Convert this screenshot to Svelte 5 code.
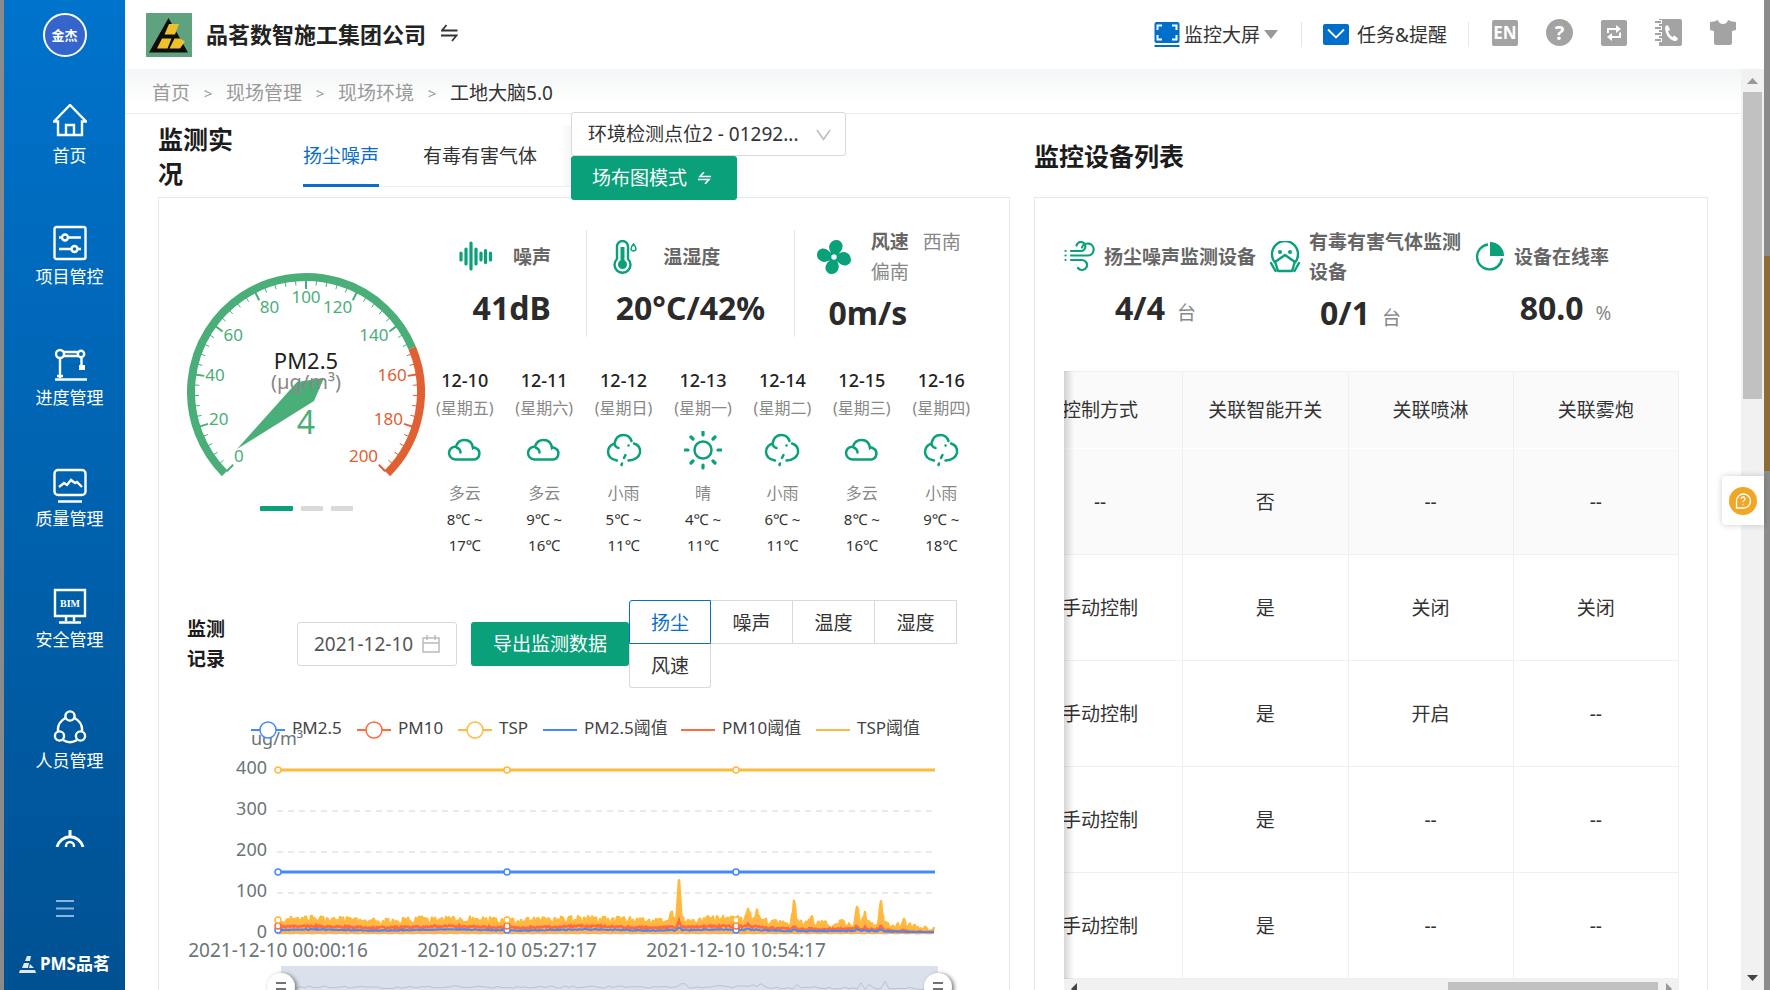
<script lang="ts">
	const menu = [
		{ name: "首页", icon: "home" },
		{ name: "项目管控", icon: "project" },
		{ name: "进度管理", icon: "progress" },
		{ name: "质量管理", icon: "quality" },
		{ name: "安全管理", icon: "safety" },
		{ name: "人员管理", icon: "people" },
		{ name: "", icon: "gauge" },
	];

	const days = [
		{ date: "12-10", week: "星期五", type: "多云", low: 8, high: 17 },
		{ date: "12-11", week: "星期六", type: "多云", low: 9, high: 16 },
		{ date: "12-12", week: "星期日", type: "小雨", low: 5, high: 11 },
		{ date: "12-13", week: "星期一", type: "晴", low: 4, high: 11 },
		{ date: "12-14", week: "星期二", type: "小雨", low: 6, high: 11 },
		{ date: "12-15", week: "星期三", type: "多云", low: 8, high: 16 },
		{ date: "12-16", week: "星期四", type: "小雨", low: 9, high: 18 },
	];

	const rows = [
		["--", "否", "--", "--"],
		["手动控制", "是", "关闭", "关闭"],
		["手动控制", "是", "开启", "--"],
		["手动控制", "是", "--", "--"],
		["手动控制", "是", "--", "--"],
	];

	const kinds = ["扬尘", "噪声", "温度", "湿度", "风速"];
	let kind = "扬尘";
	let tab = "dust";
	let date = "2021-12-10";

	// gauge: 0 - 200 over 270 degrees
	const cx = 306;
	const cy = 392;
	function polar(value: number, rx: number, ry = rx) {
		const a = ((225 - value * 1.35) * Math.PI) / 180;
		return { x: cx + rx * Math.cos(a), y: cy - ry * Math.sin(a) };
	}
	function arc(from: number, to: number, r: number) {
		const a = polar(from, r);
		const b = polar(to, r);
		const large = (to - from) * 1.35 > 180 ? 1 : 0;
		return `M${a.x} ${a.y}A${r} ${r} 0 ${large} 1 ${b.x} ${b.y}`;
	}
	const ticks = Array.from({ length: 51 }, (_, i) => {
		const value = i * 4;
		const major = i % 5 === 0;
		return {
			value,
			major,
			color: value > 150 ? "#e05f33" : "#4aae78",
			from: polar(value, 112),
			to: polar(value, major ? 103 : 107),
			label: polar(value, 102, 93),
			anchor: value === 100 ? "middle" : value < 100 ? "start" : "end",
		};
	});

	// chart
	const legend = [
		{ name: "PM2.5", x: 251, color: "#4489ff", dot: true },
		{ name: "PM10", x: 357, color: "#ff6b3d", dot: true },
		{ name: "TSP", x: 458, color: "#ffb93b", dot: true },
		{ name: "PM2.5阈值", x: 543, color: "#4489ff", dot: false },
		{ name: "PM10阈值", x: 681, color: "#ff6b3d", dot: false },
		{ name: "TSP阈值", x: 816, color: "#ffb93b", dot: false },
	];
	const yAxis = [400, 300, 200, 100, 0];
	const xAxis = [
		{ x: 278, text: "2021-12-10 00:00:16" },
		{ x: 507, text: "2021-12-10 05:27:17" },
		{ x: 736, text: "2021-12-10 10:54:17" },
	];
	const peaks = [
		[671, 12], [679, 42], [748, 14], [757, 9], [794, 21],
		[811, 10], [857, 20], [865, 11], [881, 23], [903, 7],
	];
	let seed = 7;
	function random() {
		seed = (seed * 16807) % 2147483647;
		return seed / 2147483647;
	}
	const tsp: string[] = [];
	const pm10: string[] = [];
	const pm25: string[] = [];
	for (let x = 277; x <= 934; x += 1) {
		const drop = x > 740 ? (x - 740) / 28 : 0;
		const wave = Math.sin((x - 277) / 22) * 1;
		let peak = 0;
		for (const [px, h] of peaks) {
			const d = Math.abs(x - px);
			if (d < 3) peak = Math.max(peak, h * (1 - d / 3));
		}
		const top = 921 + drop - wave + (random() - 0.5) * 8 - peak;
		tsp.push(`${x},${Math.min(top, 931).toFixed(1)}`);
		pm10.push(`${x},${Math.min(927 + drop * 0.7 - wave * 0.8 + (random() - 0.5) * 2 - peak / 6, 932).toFixed(1)}`);
		pm25.push(`${x},${Math.min(930 + drop * 0.3 - wave * 0.5 + (random() - 0.5) - peak / 14, 932).toFixed(1)}`);
	}
	const shadow = tsp.filter((_, i) => i % 4 === 0).map((p) => {
		const [x, y] = p.split(",").map(Number);
		return `${x + 4},${(991 - (934 - y) * 0.3).toFixed(1)}`;
	});
</script>

<div class="app">
	<aside class="sidebar">
		<div class="avatar">金杰</div>
		<nav>
			{#each menu as item}
				<a href="#{item.icon}" aria-label={item.name || "更多"}>
					<svg width="34" height="36" viewBox="0 0 34 36" fill="none" stroke="#fff" stroke-width="2.4">
						{#if item.icon === "home"}
							<path d="M1 17.500 17 1l16 16.500h-4V31H5V17.500zM13 31V21h8v10" />
						{:else if item.icon === "project"}
							<rect x="1.500" y="2" width="31" height="32" rx="2" />
							<path d="M6 12.500h3M15 12.500h13M6 24h12M25 24h3" />
							<circle cx="12" cy="12.500" r="3" />
							<circle cx="21.500" cy="24" r="3" />
						{:else if item.icon === "progress"}
							<circle cx="7" cy="8" r="4" />
							<circle cx="28" cy="8" r="3.200" />
							<path d="M11 6h14M11 10h14M28.500 11v10M2 33.500h32M7 12v20M4 30h6" />
							<path d="M26 19h6v5h-6z" fill="#fff" stroke="none" />
						{:else if item.icon === "quality"}
							<rect x="1.500" y="3" width="31" height="25" rx="3.500" />
							<path d="m6 20 5-4 3 2 4-5 4 3 2-1 5 5M5 34.500h24" />
						{:else if item.icon === "safety"}
							<path d="M2 2h30v26H2zM13 28v5M21 28v5M6 34.500h22" />
							<text x="17" y="19" text-anchor="middle">BIM</text>
						{:else if item.icon === "people"}
							<circle cx="17" cy="7" r="4.600" />
							<circle cx="6.500" cy="27" r="4.600" />
							<circle cx="27.500" cy="27" r="4.600" />
							<path d="M12.500 9C7 12 4.500 17 5 22M21.500 9C27 12 29.500 17 29 22M10 31q7 4.500 14 0" />
						{:else}
							<path d="M4 17a13.500 14 0 0 1 26 0M17 0v7" stroke-width="3" />
							<circle cx="17" cy="16" r="4" />
						{/if}
					</svg>
					<span>{item.name}</span>
				</a>
			{/each}
		</nav>
		<button class="fold" aria-label="收起菜单">
			<svg width="18" height="17" viewBox="0 0 18 17" stroke="#8db4dc" stroke-width="2">
				<path d="M0 1h18M0 8.500h18M0 16h18" />
			</svg>
		</button>
		<div class="brand">
			<svg width="17" height="17" viewBox="0 0 17 17" fill="#dfeaf6">
				<path d="M8 0h4l-1 5H6zM5 7h5l-1 5H3zM11 8l4 4h-5zM1 14h15l1 3H0z" />
			</svg>
			<span>PMS品茗</span>
		</div>
	</aside>

	<div class="main">
		<header>
			<svg class="logo" width="46" height="44" viewBox="0 0 46 44">
				<path d="M0 0h46v44H0z" fill="#5fa37e" />
				<path d="M22.500 5 42 39.500H3z" fill="#0c0c0a" />
				<path d="M23 11h10l-4 10.500H18.500zM16 25.500h9.500L21.500 35.500H11zM28.500 25.500h5.500l5 3-5 7H23.500z" fill="#edc02c" />
			</svg>
			<h1>品茗数智施工集团公司</h1>
			<svg class="swap" width="17" height="18" viewBox="0 0 17 18" fill="none" stroke="#333" stroke-width="1.800">
				<path d="M5.500 1 1 6.500h15.500M0 11.500h15.500L11 17" />
			</svg>
			<div class="actions">
				<a class="screen" href="#screen">
					<svg width="26" height="26" viewBox="0 0 26 26">
						<rect x="0.500" width="25" height="21" rx="2" fill="#006fcb" />
						<path d="M.5 24h25" stroke="#006fcb" stroke-width="2" />
						<path d="M3.500 8V3.500H8M18 3.500h4.500V8M22.500 13v4.500H18M8 17.500H3.500V13" fill="none" stroke="#fff" stroke-width="2" />
					</svg>
					<span>监控大屏</span>
					<svg width="14" height="9" viewBox="0 0 14 9"><path d="M0 0h14L7 9z" fill="#999" /></svg>
				</a>
				<i></i>
				<a class="task" href="#task">
					<svg width="26" height="21" viewBox="0 0 26 21">
						<rect width="26" height="21" rx="2" fill="#006fcb" />
						<path d="m5 5.500 8 8 8-8" fill="none" stroke="#fff" stroke-width="1.800" />
					</svg>
					<span>任务&amp;提醒</span>
				</a>
				<i></i>
				<div class="tools">
					<button class="lang">EN</button>
					<button class="help" aria-label="帮助">?</button>
					<button aria-label="切换">
						<svg width="26" height="26" viewBox="0 0 26 26">
							<rect width="26" height="26" rx="2" fill="#a3a3a3" />
							<path d="M7 13V9h9M19 12.500V17h-9" fill="none" stroke="#fff" stroke-width="2" />
							<path d="m15 5 5 4-5 4zM11 13l-5 4 5 4z" fill="#fff" />
						</svg>
					</button>
					<button aria-label="通讯录">
						<svg width="27" height="27" viewBox="0 0 27 27">
							<path d="M4 0h21q2 0 2 2v23q0 2-2 2H4z" fill="#a3a3a3" />
							<path d="M1 3h6M1 9h6M1 15h6M1 21h6" stroke="#fff" stroke-width="4" />
							<path d="M0 3h6M0 9h6M0 15h6M0 21h6" stroke="#a3a3a3" stroke-width="2" />
							<path d="M10 8.500q1-3 3-2l2 4-2 2q1.500 4 4.500 5.500l2-1.500 3.500 3q-.5 3-4 2.500-8.500-3-9-13.500z" fill="#fff" />
						</svg>
					</button>
					<button aria-label="皮肤">
						<svg width="26" height="25" viewBox="0 0 26 25">
							<path d="M0 2q4 0 8-2 1 4 5 4t5-4q4 2 8 2v8l-4 1v12q0 2-2 2H6q-2 0-2-2V11l-4-1z" fill="#a3a3a3" />
						</svg>
					</button>
				</div>
			</div>
		</header>

		<div class="body">
			<div class="page">
				<div class="crumbs">
					<a href="#home">首页</a><b>&gt;</b><a href="#site">现场管理</a><b>&gt;</b><a href="#env">现场环境</a><b>&gt;</b><span>工地大脑5.0</span>
				</div>
				<div class="columns">
					<section>
						<div class="head">
							<h2 class="narrow">监测实况</h2>
							<div class="tabs">
								<button class:active={tab === "dust"} on:click={() => (tab = "dust")}>扬尘噪声</button>
								<button class:active={tab === "gas"} on:click={() => (tab = "gas")}>有毒有害气体</button>
							</div>
							<div class="switches">
								<div class="select">
									<select aria-label="检测点位">
										<option>环境检测点位2 - 01292...</option>
									</select>
									<svg width="15" height="12" viewBox="0 0 15 12" fill="none" stroke="#bbb" stroke-width="1.500">
										<path d="m1 1 6.500 9.500L14 1" />
									</svg>
								</div>
								<button class="green mode">
									场布图模式
									<svg width="13" height="12" viewBox="0 0 13 12" fill="none" stroke="#fff" stroke-width="1.600">
										<path d="M6 0 2 4.500h11M0 7.500h11L7 12" />
									</svg>
								</button>
							</div>
						</div>

						<div class="card">
							<div class="overview">
								<div class="dial">
									<svg viewBox="187 262 238 226">
										<path d={arc(0, 150, 115)} fill="none" stroke="#4aae78" stroke-width="8" />
										<path d={arc(150, 200, 115)} fill="none" stroke="#e05f33" stroke-width="8" />
										{#each ticks as t}
											<line x1={t.from.x} y1={t.from.y} x2={t.to.x} y2={t.to.y} stroke={t.color} stroke-width={t.major ? 2 : 1} />
											{#if t.value % 20 === 0}
												<text x={t.label.x} y={t.label.y + 4} text-anchor={t.anchor} fill={t.color} font-size="17">{t.value}</text>
											{/if}
										{/each}
										<path d="M237 449 297 382 324 378 314 401z" fill="#4aae78" />
										<text x="306" y="369" text-anchor="middle" fill="#222" font-size="22">PM2.5</text>
										<text x="306" y="389" text-anchor="middle" fill="#888" font-size="20">(µg/m³)</text>
										<text x="306" y="434" text-anchor="middle" fill="#4aae78" font-size="32">4</text>
									</svg>
									<div class="dots"><i class="on"></i><i></i><i></i></div>
								</div>

								<div class="facts">
									<div class="metrics">
										<div class="metric">
											<div class="name">
												<svg width="34" height="34" viewBox="0 0 34 34" stroke="#0aa07a" stroke-width="3.200" stroke-linecap="round">
													<path d="M2 13v7M7 9v15M12 3v26M17 9v15M22 13v7M26.500 10.500v12M31.500 13v7" />
												</svg>
												<span>噪声</span>
											</div>
											<strong>41dB</strong>
										</div>
										<div class="metric">
											<div class="name">
												<svg width="34" height="34" viewBox="0 0 34 34" fill="none" stroke="#0aa07a" stroke-width="2.400">
													<path d="M8 19V6.500a5.500 5.500 0 0 1 11 0V19a8 8 0 1 1-11 0z" />
													<path d="M13.500 7v16" stroke-width="4" />
													<circle cx="13.500" cy="24.500" r="4.500" fill="#0aa07a" stroke="none" />
													<path d="M24.500 4q5 6 0 7-5-1 0-7z" stroke-width="1.500" />
												</svg>
												<span>温湿度</span>
											</div>
											<strong>20°C/42%</strong>
										</div>
										<div class="metric wrapped">
											<div class="name">
												<svg width="34" height="34" viewBox="0 0 34 34" fill="#0aa07a">
													<path d="M17 17Q10 9 13 4q2-4 6.500-4t6 5q1 6-8.500 12z" />
													<path d="M17 17q8-7 13-4 4 2 4 6.500t-5 6q-6 1-12-8.500z" />
													<path d="M17 17q7 8 4 13-2 4-6.500 4t-6-5q-1-6 8.500-12z" />
													<path d="M17 17q-8 7-13 4-4-2-4-6.500t5-6q6-1 12 8.500z" />
													<circle cx="17" cy="17" r="5.500" />
													<circle cx="17" cy="17" r="2.700" fill="#fff" />
												</svg>
												<span>风速<em>西南偏南</em></span>
											</div>
											<strong>0m/s</strong>
										</div>
									</div>

									<ul class="weather">
										{#each days as day}
											<li>
												<time>{day.date}</time>
												<small>({day.week})</small>
												<svg width="38" height="40" viewBox="0 0 38 40" fill="none" stroke="#0aa07a" stroke-width="2.500" stroke-linecap="round">
													{#if day.type === "多云"}
														<path d="M9.500 28.500h19a6 6 0 0 0 1-11.500q-1-1-2.500 0Q26 9 18.500 9q-6.500 0-8.500 6.500-6.500.5-7 6.500.5 6 6.500 6.500zM10.500 16.500q4 1.500 4 5" />
													{:else if day.type === "小雨"}
														<path d="M12 29.500Q3 28 3 20.500q.5-6 6.500-8Q11 4 18.500 4q6 0 8 6M9.500 13q1 3.500 4 4M29 12.500q7 2 6 9.500-2 7-11.500 7.500M23.500 14.500h.1M20.500 24l-1.500 3M17 32.500l-.5 1.500" />
													{:else}
														<circle cx="19" cy="19" r="8.500" />
														<path d="M19 1v3M19 34v3M1 19h3M34 19h3M7 6l2 2M29 30l2 2M31 6l-2 2M9 30l-2 2" stroke-width="3.200" />
													{/if}
												</svg>
												<em>{day.type}</em>
												<p>{day.low}℃ ~ <br />{day.high}℃</p>
											</li>
										{/each}
									</ul>
								</div>
							</div>

							<div class="record">
								<h3>监测记录</h3>
								<label class="date">
									<input aria-label="日期" bind:value={date} />
									<svg width="18" height="18" viewBox="0 0 18 18" fill="none" stroke="#bbb" stroke-width="1.500">
										<path d="M1 3h16v14H1zM1 8h16M5 0v5M13 0v5" />
									</svg>
								</label>
								<button class="green export">导出监测数据</button>
								<div class="kinds">
									{#each kinds as k}
										<label class:checked={kind === k}>
											<input type="radio" name="kind" value={k} bind:group={kind} />{k}
										</label>
									{/each}
								</div>
							</div>

							<svg class="chart" viewBox="159 700 850 300" font-size="18" fill="#6b7577">
								<text x="251" y="745">ug/m³</text>
								{#each legend as l}
									<path d="M{l.x} 730h34" stroke={l.color} stroke-width="1.800" />
									{#if l.dot}
										<circle cx={l.x + 17} cy="730" r="8" fill="#fff" stroke={l.color} stroke-width="1.500" />
									{/if}
									<text x={l.x + 41} y="734" font-size="17" fill="#444">{l.name}</text>
								{/each}
								{#each yAxis as v}
									<text x="267" y={774 + (400 - v) * 0.41} text-anchor="end">{v}</text>
									{#if v < 400}
										<path d="M277 {934 - v * 0.41}h657" stroke="#e4e4e4" stroke-width="1.500" stroke-dasharray="6 5" />
									{/if}
								{/each}
								<polygon points="277,934 {tsp.join(' ')} 934,934" fill="#ffb154" />
								<polyline points={tsp.join(" ")} fill="none" stroke="#ffb93b" stroke-width="2.500" stroke-linejoin="round" />
								<polyline points={pm10.join(" ")} fill="none" stroke="#ff6b3d" stroke-width="2.500" />
								<polyline points={pm25.join(" ")} fill="none" stroke="#4489ff" stroke-width="2" />
								<path d="M277 770h658" stroke="#ffb93b" stroke-width="3" />
								<path d="M277 872h658" stroke="#4489ff" stroke-width="3" />
								{#each xAxis as x}
									<circle cx={x.x} cy="770" r="3" fill="#fff" stroke="#ffb93b" stroke-width="1.500" />
									<circle cx={x.x} cy="872" r="3" fill="#fff" stroke="#4489ff" stroke-width="1.500" />
									<circle cx={x.x} cy="930" r="3" fill="#fff" stroke="#4489ff" stroke-width="1.500" />
									<circle cx={x.x} cy="926" r="3" fill="#fff" stroke="#ff6b3d" stroke-width="1.500" />
									<circle cx={x.x} cy="920" r="3" fill="#fff" stroke="#ffb93b" stroke-width="1.500" />
									<text x={x.x} y="957" text-anchor="middle" font-size="19">{x.text}</text>
								{/each}
								<path d="M281 966h657v34H281z" fill="#dbe1ec" />
								<polyline points={shadow.join(" ")} fill="none" stroke="#b8c3cc" />
								{#each [281, 938] as x}
									<circle class="handle" cx={x} cy="987" r="14" fill="#fff" />
									<path d="M{x - 5} 983h10M{x - 5} 989h10" stroke="#444" stroke-width="1.500" />
								{/each}
							</svg>
						</div>
					</section>

					<section>
						<div class="head">
							<h2>监控设备列表</h2>
						</div>
						<div class="card devices">
							<div class="stats">
								<div class="stat">
									<div class="name">
										<svg width="32" height="32" viewBox="0 0 32 32" fill="none" stroke="#0aa07a" stroke-width="2.200" stroke-linecap="round">
											<path d="M7 10h10a4.500 4.500 0 1 0-4.500-5.500M7 14.500h16.500a6 6 0 1 0-5.500-8M7 19h11a5 5 0 1 1-4 8M1.500 10h.1M1.500 14.500h.1M1.500 19h.1" />
										</svg>
										<span>扬尘噪声监测设备</span>
									</div>
									<strong>4/4<small>台</small></strong>
								</div>
								<div class="stat wrapped">
									<div class="name">
										<svg width="32" height="32" viewBox="0 0 32 32" fill="none" stroke="#0aa07a" stroke-width="2.400" stroke-linecap="round">
											<path d="M6.500 22a13 13 0 1 1 19 0M6 21l10-7 10 7M6.500 22l2.500 8h14l2.500-8M2 22l4.500 8M30 22l-4.500 8" stroke-linejoin="round" />
											<circle cx="11" cy="11" r="2" fill="#0aa07a" stroke="none" />
											<circle cx="21" cy="11" r="2" fill="#0aa07a" stroke="none" />
										</svg>
										<span>有毒有害气体监测设备</span>
									</div>
									<strong>0/1<small>台</small></strong>
								</div>
								<div class="stat">
									<div class="name">
										<svg width="32" height="32" viewBox="0 0 32 32">
											<path d="M14 3.500a12.500 12.500 0 1 0 14 14" fill="none" stroke="#0aa07a" stroke-width="2.400" />
											<path d="M16 1a14 14 0 0 1 14 14H16z" fill="#0aa07a" />
										</svg>
										<span>设备在线率</span>
									</div>
									<strong>80.0<small>%</small></strong>
								</div>
							</div>

							<div class="grid">
								<div class="clip">
									<table>
										<thead>
											<tr><th>控制方式</th><th>关联智能开关</th><th>关联喷淋</th><th>关联雾炮</th></tr>
										</thead>
										<tbody>
											{#each rows as row, i}
												<tr class:hover={i === 0}>
													{#each row as cell}
														<td>{cell}</td>
													{/each}
												</tr>
											{/each}
										</tbody>
									</table>
								</div>
								<div class="hbar">
									<svg width="6" height="12" viewBox="0 0 6 12"><path d="M6 0v12L0 6z" fill="#444" /></svg>
									<i></i>
									<svg width="6" height="12" viewBox="0 0 6 12"><path d="M0 0v12l6-6z" fill="#999" /></svg>
								</div>
							</div>
						</div>
					</section>
				</div>
			</div>
			<div class="vbar">
				<svg width="11" height="6" viewBox="0 0 11 6"><path d="M0 6h11L5.500 0z" fill="#999" /></svg>
				<i></i>
				<svg width="11" height="6" viewBox="0 0 11 6"><path d="M0 0h11L5.500 6z" fill="#444" /></svg>
			</div>
		</div>

		<button class="service" aria-label="在线客服">
			<svg width="28" height="28" viewBox="0 0 28 28">
				<circle cx="14" cy="14" r="14" fill="#f2a626" />
				<path d="M7.500 21v-7a7 7 0 1 1 6.500 7z" fill="none" stroke="#fff" stroke-width="1.300" />
				<path d="M12 12q.3-2 2-2t2 1.800q0 1-1 1.700t-1 1.700M14 17.200v1" fill="none" stroke="#fff" stroke-width="1.300" />
			</svg>
		</button>
	</div>
</div>

<style>
	:global(body) {
		margin: 0;
		overflow: hidden;
	}

	.app {
		display: flex;
		height: 100vh;
		padding: 0 6px 0 4px;
		box-sizing: border-box;
		overflow: hidden;
		color: #333;
		font: 19px/30px "Noto Sans", "Noto Sans CJK SC", sans-serif;
		background: linear-gradient(#8b8b8b 256px, #8f6b36 256px 471px, #8b8b8b 471px);
		background-position: right;
		background-size: 6px 100%;
		background-repeat: no-repeat;
		background-color: #8b8b8b;
	}

	.app :global(*) {
		box-sizing: border-box;
	}

	svg {
		flex-shrink: 0;
		display: block;
	}

	a {
		color: inherit;
		text-decoration: none;
	}

	button,
	input,
	select {
		font: inherit;
		color: inherit;
		border: 0;
		padding: 0;
		background: none;
		cursor: pointer;
	}

	h1,
	h2,
	h3,
	p,
	ul {
		margin: 0;
		padding: 0;
	}

	em {
		font-style: normal;
	}

	/* sidebar */
	.sidebar {
		display: flex;
		flex-direction: column;
		align-items: center;
		width: 121px;
		flex-shrink: 0;
		color: #fff;
		background: linear-gradient(#0073cc, #005192);
	}

	.avatar {
		width: 44px;
		height: 44px;
		margin: 13px 0 47px;
		border: 2px solid #fff;
		border-radius: 50%;
		background: #3565cc;
		font-size: 13px;
		font-weight: bold;
		line-height: 40px;
		text-align: center;
		flex-shrink: 0;
	}

	nav {
		flex: 1;
		min-height: 0;
		overflow: hidden;
		padding-left: 10px;
	}

	nav a {
		display: flex;
		flex-direction: column;
		align-items: center;
		gap: 1px;
		height: 121px;
		font-size: 17px;
	}

	nav text {
		fill: #fff;
		stroke: none;
		font: bold 10px "Liberation Serif", serif;
	}

	.fold {
		height: 17px;
		margin-top: 53px;
	}

	.brand {
		display: flex;
		align-items: center;
		gap: 4px;
		margin: 32px 0 11px;
		font-size: 17px;
		font-weight: bold;
	}

	/* header */
	.main {
		flex: 1;
		min-width: 0;
		display: flex;
		flex-direction: column;
		position: relative;
		background: #fff;
	}

	header {
		display: flex;
		align-items: center;
		height: 69px;
		padding: 0 28px 0 21px;
		flex-shrink: 0;
	}

	h1 {
		margin: 0 15px 0 14px;
		padding-bottom: 2px;
		font-size: 22px;
		color: #222;
	}

	.swap {
		margin-bottom: 3px;
	}

	.actions {
		display: flex;
		align-items: center;
		margin-left: auto;
	}

	.actions i {
		width: 1px;
		height: 25px;
		background: #e8e8e8;
	}

	.screen,
	.task {
		display: flex;
		align-items: center;
	}

	.screen {
		gap: 4px;
		margin-right: 23px;
	}

	.task {
		gap: 8px;
		margin: 0 21px;
	}

	.tools {
		display: flex;
		align-items: center;
		gap: 28px;
		margin-left: 23px;
		padding-bottom: 4px;
	}

	.lang,
	.help {
		width: 26px;
		height: 26px;
		border-radius: 2px;
		background: #a3a3a3;
		color: #fff;
		font-size: 17px;
		font-weight: bold;
		line-height: 26px;
	}

	.help {
		width: 27px;
		height: 27px;
		border-radius: 50%;
		font-size: 20px;
	}

	/* page */
	.body {
		flex: 1;
		min-height: 0;
		display: flex;
	}

	.page {
		flex: 1;
		min-width: 0;
		overflow: hidden;
	}

	.crumbs {
		display: flex;
		align-items: center;
		height: 45px;
		padding: 3px 27px 0;
		border-bottom: 1px solid #ebebeb;
		background: linear-gradient(#f3f5f6, #fff 80%);
		color: #999;
	}

	.crumbs b {
		width: 36px;
		font-size: 15px;
		font-weight: normal;
		text-align: center;
	}

	.crumbs span {
		color: #333;
	}

	.columns {
		display: grid;
		grid-template-columns: minmax(0, 852fr) minmax(0, 674fr);
		gap: 24px;
		padding: 0 33px;
	}

	.head {
		display: flex;
		align-items: center;
		height: 83px;
	}

	h2 {
		font-size: 25px;
		line-height: 34px;
		color: #1c1c1c;
	}

	.narrow {
		width: 80px;
		margin-right: 65px;
	}

	.tabs {
		display: flex;
		gap: 44px;
		width: 268px;
		height: 62px;
		border-bottom: 1px solid #eee;
		background: linear-gradient(to left, #f5f5f5, #fff 10px);
		white-space: nowrap;
	}

	.tabs button {
		height: 62px;
	}

	.tabs .active {
		color: #0a6dc8;
		border-bottom: 3px solid #0a6dc8;
		padding-top: 3px;
	}

	.switches {
		position: relative;
		width: 275px;
	}

	.select {
		position: relative;
		height: 44px;
	}

	.select select {
		width: 100%;
		height: 44px;
		padding: 0 16px;
		border: 1px solid #d9d9d9;
		border-radius: 3px;
		background: #fff;
		appearance: none;
	}

	.select svg {
		position: absolute;
		top: 17px;
		right: 15px;
		pointer-events: none;
	}

	.green {
		height: 44px;
		border-radius: 3px;
		background: #0aa07a;
		color: #fff;
	}

	.mode {
		display: flex;
		align-items: center;
		gap: 11px;
		padding: 0 26px 0 21px;
	}

	.card {
		border: 1px solid #e8e8e8;
		padding-top: 32px;
	}

	.overview {
		display: flex;
		padding: 0 28px;
	}

	.dial {
		width: 238px;
		padding-top: 32px;
		flex-shrink: 0;
	}

	.dots {
		display: flex;
		justify-content: center;
		gap: 8px;
		margin-top: 18px;
	}

	.dots i {
		width: 22px;
		height: 5px;
		border-radius: 1px;
		background: #d9d9d9;
	}

	.dots .on {
		width: 33px;
		background: #0aa07a;
	}

	.facts {
		flex: 1;
		min-width: 0;
	}

	.metrics {
		display: grid;
		grid-template-columns: minmax(0, 149fr) minmax(0, 207fr) minmax(0, 147fr);
		height: 102px;
		margin: 0 40px 0 12px;
	}

	.metric + .metric {
		border-left: 1px solid #e8e8e8;
	}

	.metric .name {
		padding-left: 22px;
		gap: 20px;
	}

	.metric .name span {
		width: 94px;
		flex-shrink: 0;
	}

	.metric em {
		margin-left: 14px;
		color: #888;
		font-weight: normal;
		word-break: break-all;
	}

	.name {
		display: flex;
		align-items: center;
		height: 54px;
		color: #666;
		font-weight: bold;
	}

	.wrapped .name {
		margin-bottom: 5px;
	}

	strong {
		display: block;
		font-size: 32px;
		line-height: 48px;
		text-align: center;
		color: #2b2b2b;
	}

	strong small {
		margin-left: 12px;
		font-size: 19px;
		font-weight: normal;
		color: #888;
	}

	.weather {
		display: grid;
		grid-template-columns: repeat(7, minmax(0, 1fr));
		margin-top: 35px;
		list-style: none;
	}

	.weather li {
		display: flex;
		flex-direction: column;
		align-items: center;
		font-size: 16px;
		line-height: 26px;
	}

	.weather time {
		font-size: 18px;
		font-weight: 500;
		color: #222;
	}

	.weather small {
		font-size: 16px;
		line-height: 30px;
		color: #888;
	}

	.weather svg {
		margin: 8px 0 10px;
	}

	.weather em {
		line-height: 25px;
		color: #888;
	}

	.weather p {
		font-size: 15px;
		text-align: center;
	}

	.record {
		display: flex;
		align-items: center;
		margin-top: 42px;
		padding: 0 28px;
	}

	.record h3 {
		width: 40px;
		margin-right: 70px;
		font-size: 19px;
		color: #1c1c1c;
	}

	.date {
		display: flex;
		align-items: center;
		width: 160px;
		height: 44px;
		margin-right: 14px;
		padding: 0 16px;
		border: 1px solid #d9d9d9;
		border-radius: 3px;
	}

	.date input {
		flex: 1;
		min-width: 0;
		color: #555;
	}

	.export {
		width: 158px;
		flex-shrink: 0;
	}

	.kinds {
		flex: 1;
		display: flex;
		flex-wrap: wrap;
	}

	.kinds label {
		width: 82px;
		height: 44px;
		border: 1px solid #d9d9d9;
		border-left-width: 0;
		line-height: 44px;
		text-align: center;
		cursor: pointer;
	}

	.kinds label:last-child {
		border-left-width: 1px;
		border-top: 0;
		border-radius: 0 0 3px 3px;
	}

	.kinds .checked {
		border: 1px solid #0a6dc8;
		border-radius: 3px 0 0 0;
		color: #0a6dc8;
	}

	.kinds input {
		position: absolute;
		opacity: 0;
	}

	.chart {
		width: 100%;
		margin-top: 12px;
	}

	.handle {
		filter: drop-shadow(2px 1px 2px #777);
	}

	/* devices */
	.devices {
		padding-left: 29px;
		padding-right: 28px;
		min-height: 100%;
	}

	.stats {
		display: grid;
		grid-template-columns: repeat(3, minmax(0, 1fr));
		height: 102px;
	}

	.stat {
		padding-right: 12px;
	}

	.stat .name {
		gap: 8px;
	}

	.stat strong {
		padding-right: 10px;
	}

	.grid {
		margin-top: 39px;
	}

	/* scrolled to the far right */
	.clip {
		position: relative;
		display: flex;
		justify-content: flex-end;
		overflow: hidden;
	}

	.clip::before {
		content: "";
		position: absolute;
		left: 0;
		top: 0;
		bottom: 0;
		width: 10px;
		background: linear-gradient(to right, rgba(0, 0, 0, 0.16), transparent);
	}

	table {
		width: 661px;
		flex-shrink: 0;
		table-layout: fixed;
		border-collapse: separate;
		border-spacing: 0;
		border-top: 1px solid #f0f0f0;
	}

	th,
	td {
		height: 106px;
		padding: 0;
		border-right: 1px solid #efefef;
		border-bottom: 1px solid #efefef;
		font-weight: normal;
		text-align: center;
	}

	th {
		height: 77px;
		border-bottom-color: #fff;
	}

	th,
	.hover td {
		background: #fafafa;
	}

	.hbar {
		display: flex;
		align-items: center;
		height: 20px;
		padding: 0 7px;
		background: #f1f1f1;
	}

	.hbar i {
		width: 35%;
		height: 15px;
		margin: 0 8px 0 auto;
		background: #c1c1c1;
	}

	.vbar {
		display: flex;
		flex-direction: column;
		align-items: center;
		width: 23px;
		padding: 9px 0;
		background: #f1f1f1;
	}

	.vbar i {
		width: 19px;
		height: 34%;
		margin: 8px 0 auto;
		background: #c1c1c1;
	}

	.service {
		position: absolute;
		right: 0;
		top: 476px;
		display: grid;
		place-items: center;
		width: 42px;
		height: 49px;
		border-radius: 4px 0 0 4px;
		background: #fff;
		box-shadow: 0 0 6px rgba(0, 0, 0, 0.2);
	}
</style>
